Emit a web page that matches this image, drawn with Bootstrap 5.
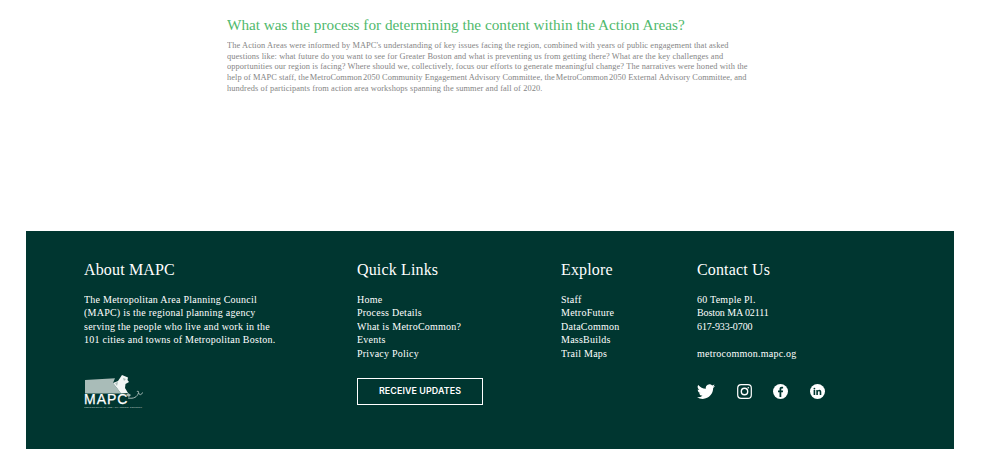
<!DOCTYPE html>
<html lang="en">
<head>
<meta charset="utf-8">
<title>MetroCommon 2050</title>
<link href="https://cdn.jsdelivr.net/npm/bootstrap@5.3.0/dist/css/bootstrap.min.css" rel="stylesheet">
<style>
html,body{height:467px;overflow:hidden}
body{background:#fff;font-family:"Liberation Serif","Times New Roman",serif}
.faq-wrap{padding:15px 0 0 227px;height:231px}
.faq-title{font-family:inherit;color:#4fb96c;font-size:15.25px;line-height:19px;margin:0 0 7px;font-weight:400;opacity:.999}
.faq-text{color:#858585;font-size:8.4px;line-height:10.67px;margin:0;width:530px;letter-spacing:.09px;white-space:nowrap;opacity:.999}
.tight-words{word-spacing:-1.1px}
.tight-line{letter-spacing:.05px}
.site-foot{background:#003630;color:#fff;margin:0 28px 0 26px;height:218px;padding:29px 0 0 58px}
.foot-col-a{width:273px}
.foot-col-b{width:204px}
.foot-col-c{width:136px}
.foot-col-d{width:200px}
.foot-head{font-family:inherit;font-size:16px;line-height:20px;font-weight:400;margin:0 0 13px;letter-spacing:.15px;opacity:.999}
.foot-text{font-size:10px;line-height:13.45px;margin:0;letter-spacing:.24px;white-space:nowrap;opacity:.999}
.foot-text a{color:#fff;text-decoration:none;display:block}
.num-tight{letter-spacing:-.1px}
.foot-lower{height:46px}
.updates-btn{font-family:"Inter","Liberation Sans",sans-serif;font-size:8.9px;font-weight:600;line-height:1;color:#fff;border:1px solid #fff;border-radius:0;width:126px;height:27px;padding:0;margin-top:18px;letter-spacing:.1px}
.updates-btn:hover{color:#fff}
.logo-svg{display:block;margin-top:14px}
.social-row{gap:21.5px;margin-top:22px}
.social-row svg{display:block}
</style>
</head>
<body>
<section class="faq-wrap">
  <h2 class="faq-title">What was the process for determining the content within the Action Areas?</h2>
  <p class="faq-text">The Action Areas were informed by MAPC's understanding of key issues facing the region, combined with years of public engagement that asked<br>questions like: what future do you want to see for Greater Boston and what is preventing us from getting there? What are the key challenges and<br>opportunities our region is facing? Where should we, collectively, focus our efforts to generate meaningful change? The narratives were honed with the<br><span class="tight-line">help of MAPC staff, <span class="tight-words">the MetroCommon 2050</span> Community Engagement Advisory Committee, <span class="tight-words">the MetroCommon 2050</span> External Advisory Committee, and</span><br>hundreds of participants from action area workshops spanning the summer and fall of 2020.</p>
</section>
<footer class="site-foot">
  <div class="d-flex">
    <div class="foot-col-a">
      <h3 class="foot-head">About MAPC</h3>
      <p class="foot-text">The Metropolitan Area Planning Council<br>(MAPC) is the regional planning agency<br>serving the people who live and work in the<br>101 cities and towns of Metropolitan Boston.</p>
    </div>
    <div class="foot-col-b">
      <h3 class="foot-head">Quick Links</h3>
      <div class="foot-text"><a href="#">Home</a><a href="#">Process Details</a><a href="#">What is MetroCommon?</a><a href="#">Events</a><a href="#">Privacy Policy</a></div>
    </div>
    <div class="foot-col-c">
      <h3 class="foot-head">Explore</h3>
      <div class="foot-text"><a href="#">Staff</a><a href="#">MetroFuture</a><a href="#">DataCommon</a><a href="#">MassBuilds</a><a href="#">Trail Maps</a></div>
    </div>
    <div class="foot-col-d">
      <h3 class="foot-head">Contact Us</h3>
      <div class="foot-text">60 Temple Pl.<br><span class="num-tight">Boston MA 02111</span><br><span class="num-tight">617-933-0700</span><br><br><a href="#">metrocommon.mapc.og</a></div>
    </div>
  </div>
  <div class="d-flex foot-lower">
    <div class="foot-col-a">
      <svg class="logo-svg" width="60" height="36" viewBox="0 0 60 36" role="img" aria-label="MAPC logo">
        <path d="M1 6 L31 4.3 L29 9 L33 14 L37 19.5 L1 19.5 Z" fill="#a9bcb8"/>
        <path d="M29 9 L34 7 L38 1 L44 3.5 L43.5 6 L45 8 L41.5 10 L41 14 L44 19 L37 19.5 L33 14 Z" fill="#f2f6f5"/>
        <path d="M31 9 L34 8 L33 12 Z M39 4 L42 5 L40 7 Z" fill="#a9bcb8"/>
        <path d="M44 19 L47 21 L45 23 L42 21 Z" fill="#a9bcb8"/>
        <path d="M44 24 C50 25 53 23 54.5 19 C55 17 53.5 16.5 53 18 M54.5 19 C56 21.5 57.5 21 58.5 18.5" fill="none" stroke="#a9bcb8" stroke-width="1"/>
        <text x="0" y="29.5" font-family="Liberation Sans, sans-serif" font-size="14" fill="#fff" stroke="#fff" stroke-width=".25" letter-spacing="1">MAPC</text>
        <text x="0" y="33.6" font-family="Liberation Sans, sans-serif" font-size="2.5" fill="#c9d6d3" letter-spacing=".18">METROPOLITAN AREA PLANNING COUNCIL</text>
      </svg>
    </div>
    <div class="foot-col-b">
      <button type="button" class="btn updates-btn">RECEIVE UPDATES</button>
    </div>
    <div class="foot-col-c"></div>
    <div class="foot-col-d">
      <div class="d-flex align-items-center social-row">
        <svg width="18" height="18" viewBox="0 0 16 16" fill="#fff"><path d="M5.026 15c6.038 0 9.341-5.003 9.341-9.334 0-.14 0-.282-.006-.422A6.685 6.685 0 0 0 16 3.542a6.658 6.658 0 0 1-1.889.518 3.301 3.301 0 0 0 1.447-1.817 6.533 6.533 0 0 1-2.087.793A3.286 3.286 0 0 0 7.875 6.03a9.325 9.325 0 0 1-6.767-3.429 3.289 3.289 0 0 0 1.018 4.382A3.323 3.323 0 0 1 .64 6.575v.045a3.288 3.288 0 0 0 2.632 3.218 3.203 3.203 0 0 1-.865.115 3.23 3.23 0 0 1-.614-.057 3.283 3.283 0 0 0 3.067 2.277A6.588 6.588 0 0 1 .78 13.58a6.32 6.32 0 0 1-.78-.045A9.344 9.344 0 0 0 5.026 15z"/></svg>
        <svg width="15" height="15" viewBox="0 0 15 15" fill="none" stroke="#fff"><rect x=".7" y=".7" width="13.6" height="13.6" rx="3.4" stroke-width="1.2"/><circle cx="7.5" cy="7.5" r="3.2" stroke-width="1.4"/><circle cx="11.3" cy="3.7" r=".8" fill="#fff" stroke="none"/></svg>
        <svg width="15" height="15" viewBox="0 0 15 15"><circle cx="7.5" cy="7.5" r="7.5" fill="#fff"/><path d="M6.5 13V8.3H5V6.5h1.5V5.2C6.5 3.6 7.4 2.8 8.8 2.8c.6 0 1.1.05 1.3.1v1.6h-.9c-.7 0-.9.35-.9.9v1.1h1.8l-.25 1.8H8.3V13z" fill="#003630"/></svg>
        <svg width="15" height="15" viewBox="0 0 15 15"><circle cx="7.5" cy="7.5" r="7.5" fill="#fff"/><g fill="#003630"><rect x="3.6" y="6" width="1.6" height="5"/><circle cx="4.4" cy="4.6" r=".9"/><path d="M6.3 6h1.5v.7c.3-.5.9-.85 1.6-.85 1.4 0 1.9.9 1.9 2.3V11H9.7V8.5c0-.7-.2-1.2-.8-1.2s-1 .5-1 1.2V11H6.3z"/></g></svg>
      </div>
    </div>
  </div>
</footer>
</body>
</html>
